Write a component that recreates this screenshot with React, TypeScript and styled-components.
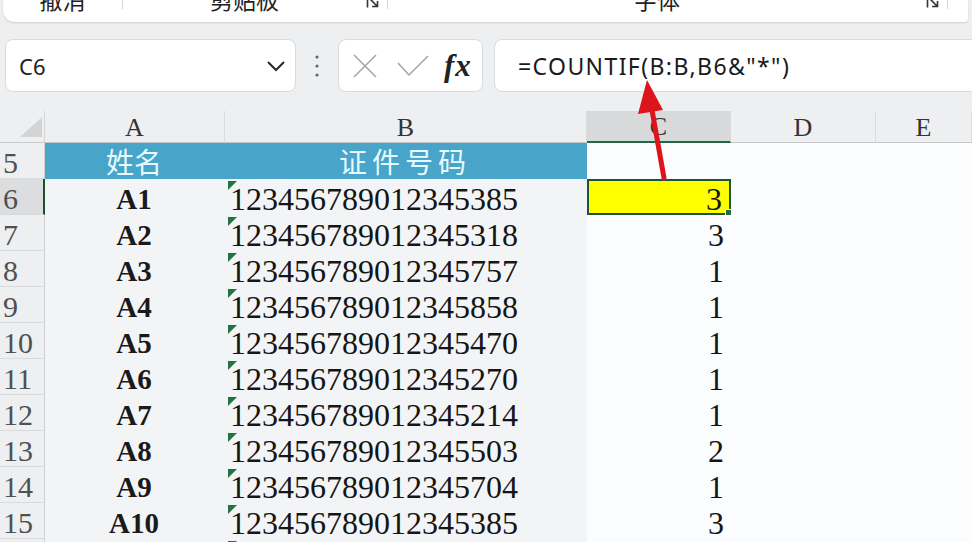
import React from 'react';
import styled, { createGlobalStyle } from 'styled-components';

const GlobalStyle = createGlobalStyle`
  html, body {
    margin: 0;
    padding: 0;
  }
  body {
    background: #eeeff1;
    font-family: "Noto Sans", "Noto Sans CJK SC", sans-serif;
  }
`;

const Page = styled.div`
  position: relative;
  width: 972px;
  height: 542px;
  overflow: hidden;
  background: #eeeff1;
`;

const Ribbon = styled.div`
  height: 22px;
  margin: 0 4px 0 3px;
  background: #fff;
  border-bottom-left-radius: 12px;
  border-bottom-right-radius: 4px;
  box-shadow: 0 1px 2px rgba(0, 0, 0, 0.14);
  display: grid;
  grid-template-columns: 120px 265px 560px 1fr;
  overflow: hidden;
`;

const RibbonGroup = styled.div<{ $sep?: boolean }>`
  height: 9px;
  display: flex;
  align-items: flex-end;
  border-right: ${(p) => (p.$sep ? '1px solid #d4d4d4' : 'none')};
`;

const RibbonLabel = styled.span`
  flex: 1;
  text-align: center;
  font-family: "Noto Sans CJK SC", sans-serif;
  font-size: 23px;
  line-height: 23px;
  color: #222;
  margin-bottom: -2px;
`;

const Launcher = styled.svg`
  flex: none;
  margin: 0 7px 0 0;
`;

const FormulaRow = styled.div`
  display: flex;
  height: 53px;
  margin-top: 17px;
  padding-left: 5px;
`;

const Box = styled.div`
  box-sizing: border-box;
  height: 53px;
  background: #fff;
  border: 1px solid #d9dadc;
  border-radius: 8px;
  display: flex;
  align-items: center;
`;

const NameBox = styled(Box)`
  width: 291px;
  padding: 0 9px 0 13px;
  justify-content: space-between;
  font-size: 22px;
  color: #222;
`;

const DotsCell = styled.div`
  width: 42px;
  display: flex;
  align-items: center;
  justify-content: center;
`;

const FxBox = styled(Box)`
  width: 145px;
  padding-left: 14px;
`;

const FxLabel = styled.span`
  font-family: "Liberation Serif", serif;
  font-style: italic;
  font-weight: 700;
  font-size: 31px;
  color: #222;
  margin-left: 15px;
  letter-spacing: 1px;
`;

const FormulaBox = styled(Box)`
  flex: 1;
  margin: 0 -14px 0 11px;
  padding-left: 23px;
  font-size: 23px;
  letter-spacing: 1.4px;
  color: #1a1a1a;
`;

const Sheet = styled.div`
  margin-top: 19px;
  display: grid;
  grid-template-columns: 45px 180px 362px 144px 145px 96px;
  grid-template-rows: 32px;
  grid-auto-rows: 36px;
`;

const Corner = styled.div`
  display: flex;
  justify-content: flex-end;
  align-items: flex-end;
  padding: 0 2px 5px 0;
  border-bottom: 1px solid #c9c9c9;
  border-right: 1px solid #d6d6d6;
`;

const CornerMark = styled.div`
  width: 22px;
  height: 20px;
  background: #d3d4d6;
  clip-path: polygon(100% 0, 100% 100%, 0 100%);
`;

const ColHeader = styled.div<{ $active?: boolean }>`
  box-sizing: border-box;
  display: flex;
  align-items: center;
  justify-content: center;
  background: ${(p) => (p.$active ? '#d8d9db' : '#eeeff1')};
  border-right: 1px solid #dadbdd;
  border-bottom: ${(p) => (p.$active ? '2px solid #1e6b41' : '1px solid #c6c7c9')};
  font-family: "Liberation Serif", serif;
  font-size: 26px;
  color: #333;
  padding-top: 2px;
`;

const RowHeader = styled.div<{ $active?: boolean }>`
  box-sizing: border-box;
  display: flex;
  align-items: center;
  padding: 4px 0 0 3px;
  background: ${(p) => (p.$active ? '#dcdddf' : '#eeeff1')};
  border-right: ${(p) => (p.$active ? '2px solid #1e4f33' : '1px solid #cfd0d2')};
  border-bottom: 1px solid #d9dadc;
  font-family: "Liberation Serif", serif;
  font-size: 30px;
  line-height: 1;
  color: #505050;
`;

type Tone = 'band' | 'plain' | 'head' | 'sel';

const toneBg: Record<Tone, string> = {
  band: '#f3f4f6',
  plain: '#fbfcfe',
  head: '#48a4c9',
  sel: '#ffff00',
};

const Cell = styled.div<{ $tone: Tone; $align?: 'left' | 'center' | 'right' }>`
  position: relative;
  box-sizing: border-box;
  display: flex;
  align-items: center;
  justify-content: ${(p) =>
    p.$align === 'right' ? 'flex-end' : p.$align === 'center' ? 'center' : 'flex-start'};
  padding: ${(p) => (p.$tone === 'head' ? '0' : '4px')} 7px 0 5px;
  background: ${(p) => toneBg[p.$tone]};
  border: ${(p) => (p.$tone === 'sel' ? '2px solid #1d5534' : 'none')};
  font-family: "Liberation Serif", serif;
  font-size: 32px;
  line-height: 1;
  color: #151515;
  white-space: nowrap;
`;

const NameText = styled.span`
  font-weight: 700;
  font-size: 29px;
  color: #1a1a1a;
`;

const HeadText = styled.span<{ $spread?: number }>`
  font-family: "Noto Sans CJK SC", sans-serif;
  font-size: 28px;
  color: #e6fbff;
  letter-spacing: ${(p) => p.$spread ?? 0}px;
`;

const TextMark = styled.span`
  position: absolute;
  left: 3px;
  top: 2px;
  width: 9px;
  height: 9px;
  background: #217346;
  clip-path: polygon(0 0, 100% 0, 0 100%);
`;

const FillHandle = styled.span`
  position: absolute;
  right: -6px;
  bottom: -6px;
  width: 8px;
  height: 8px;
  background: #1f6b40;
  border: 1px solid #fff;
`;

const Arrow = styled.svg`
  position: absolute;
  left: 625px;
  top: 70px;
  pointer-events: none;
`;

const rows: [string, string, number][] = [
  ['A1', '123456789012345385', 3],
  ['A2', '123456789012345318', 3],
  ['A3', '123456789012345757', 1],
  ['A4', '123456789012345858', 1],
  ['A5', '123456789012345470', 1],
  ['A6', '123456789012345270', 1],
  ['A7', '123456789012345214', 1],
  ['A8', '123456789012345503', 2],
  ['A9', '123456789012345704', 1],
  ['A10', '123456789012345385', 3],
];

function LauncherIcon() {
  return (
    <Launcher width="14" height="14" viewBox="0 0 14 14">
      <path d="M1.5 1 V12.5 M4 4 L11 11 M6 11.5 H11.5 V6" fill="none" stroke="#333" strokeWidth="1.6" />
    </Launcher>
  );
}

export default function App() {
  return (
    <Page>
      <GlobalStyle />
      <Ribbon>
        <RibbonGroup $sep>
          <RibbonLabel>撤消</RibbonLabel>
        </RibbonGroup>
        <RibbonGroup $sep>
          <RibbonLabel>剪贴板</RibbonLabel>
          <LauncherIcon />
        </RibbonGroup>
        <RibbonGroup $sep>
          <RibbonLabel>字体</RibbonLabel>
          <LauncherIcon />
        </RibbonGroup>
        <RibbonGroup />
      </Ribbon>

      <FormulaRow>
        <NameBox>
          <span>C6</span>
          <svg width="20" height="12" viewBox="0 0 20 12">
            <path d="M2 2 L10 10 L18 2" fill="none" stroke="#2a2a2a" strokeWidth="2" />
          </svg>
        </NameBox>
        <DotsCell>
          <svg width="6" height="24" viewBox="0 0 6 24">
            <circle cx="3" cy="3" r="1.6" fill="#666" />
            <circle cx="3" cy="12" r="1.6" fill="#666" />
            <circle cx="3" cy="21" r="1.6" fill="#666" />
          </svg>
        </DotsCell>
        <FxBox>
          <svg width="24" height="24" viewBox="0 0 24 24">
            <path d="M1 1 L23 23 M23 1 L1 23" fill="none" stroke="#a3a3a3" strokeWidth="1.5" />
          </svg>
          <svg width="32" height="22" viewBox="0 0 32 22" style={{ marginLeft: 20 }}>
            <path d="M1 8 L12 20 L31 1" fill="none" stroke="#a3a3a3" strokeWidth="1.5" />
          </svg>
          <FxLabel>fx</FxLabel>
        </FxBox>
        <FormulaBox>=COUNTIF(B:B,B6&amp;"*")</FormulaBox>
      </FormulaRow>

      <Sheet>
        <Corner>
          <CornerMark />
        </Corner>
        <ColHeader>A</ColHeader>
        <ColHeader>B</ColHeader>
        <ColHeader $active>C</ColHeader>
        <ColHeader>D</ColHeader>
        <ColHeader>E</ColHeader>

        <RowHeader>5</RowHeader>
        <Cell $tone="head" $align="center">
          <HeadText>姓名</HeadText>
        </Cell>
        <Cell $tone="head" $align="center">
          <HeadText $spread={5}>证件号码</HeadText>
        </Cell>
        <Cell $tone="plain" />
        <Cell $tone="plain" />
        <Cell $tone="plain" />

        {rows.map(([name, id, count], i) => (
          <React.Fragment key={name}>
            <RowHeader $active={i === 0}>{i + 6}</RowHeader>
            <Cell $tone="band" $align="center">
              <NameText>{name}</NameText>
            </Cell>
            <Cell $tone="band">
              <TextMark />
              {id}
            </Cell>
            <Cell $tone={i === 0 ? 'sel' : 'plain'} $align="right">
              {count}
              {i === 0 && <FillHandle />}
            </Cell>
            <Cell $tone="plain" />
            <Cell $tone="plain" />
          </React.Fragment>
        ))}

        <RowHeader>16</RowHeader>
        <Cell $tone="band" />
        <Cell $tone="band">
          <TextMark />
        </Cell>
        <Cell $tone="plain" />
        <Cell $tone="plain" />
        <Cell $tone="plain" />
      </Sheet>

      <Arrow width="50" height="112" viewBox="0 0 50 112">
        <path d="M39 108 L27 40" stroke="#dc151c" strokeWidth="5" strokeLinecap="round" />
        <polygon points="22,10 13,44 38,40" fill="#dc151c" />
      </Arrow>
    </Page>
  );
}
